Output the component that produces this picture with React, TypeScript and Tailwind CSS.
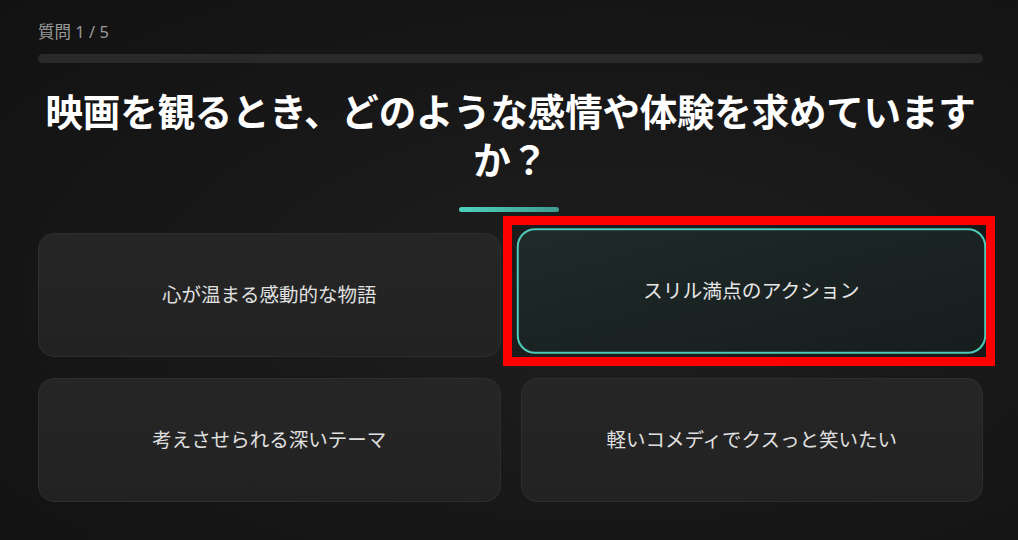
const options = [
  { label: '心が温まる感動的な物語', selected: false },
  { label: 'スリル満点のアクション', selected: true },
  { label: '考えさせられる深いテーマ', selected: false },
  { label: '軽いコメディでクスっと笑いたい', selected: false },
];

export default function App() {
  return (
    <div
      className="relative w-[1018px] h-[540px] overflow-hidden bg-[#151515] bg-[radial-gradient(ellipse_at_60%_55%,#1f1f1f_0%,#171717_55%,#121212_100%)] px-[38px] pt-[20px]"
      style={{ fontFamily: '"Noto Sans", "Noto Sans CJK JP", sans-serif' }}
    >
      <div className="text-[16.5px] leading-[23px] text-[#9a9a9a]">質問 1 / 5</div>
      <div className="mt-[11px] h-[9px] w-[945px] rounded-full bg-[#2a2a2a]" />

      <h1 className="mt-[25px] w-[945px] text-center text-[37.5px] font-bold leading-[48px] tracking-[-0.2px] text-white">
        映画を観るとき、どのような感情や体験を求めていますか？
      </h1>
      <div className="mx-auto mt-[23px] h-[5px] w-[100px] rounded-full bg-gradient-to-r from-[#4fd1c0] to-[#3d9c8f]" />

      <div className="mt-[21px] grid w-[945px] grid-cols-2 gap-x-[20px] gap-y-[21px]">
        {options.map((o) =>
          o.selected ? (
            <button
              key={o.label}
              className="flex h-[124px] -translate-x-[1px] -translate-y-[4px] scale-[1.014] items-center justify-center rounded-[18px] border-2 border-[#4ec9b8] bg-gradient-to-br from-[#1f2a29] to-[#161d1d] text-[19.5px] text-[#e6e6e6]"
            >
              {o.label}
            </button>
          ) : (
            <button
              key={o.label}
              className="flex h-[124px] items-center justify-center rounded-[16px] border border-[#2e2e2e] bg-gradient-to-b from-[#262626] to-[#222222] text-[19.5px] text-[#e0e0e0]"
            >
              {o.label}
            </button>
          )
        )}
      </div>

      <div className="pointer-events-none absolute left-[503px] top-[216px] h-[150px] w-[492px] border-[9px] border-[#ff0000]" />
    </div>
  );
}
